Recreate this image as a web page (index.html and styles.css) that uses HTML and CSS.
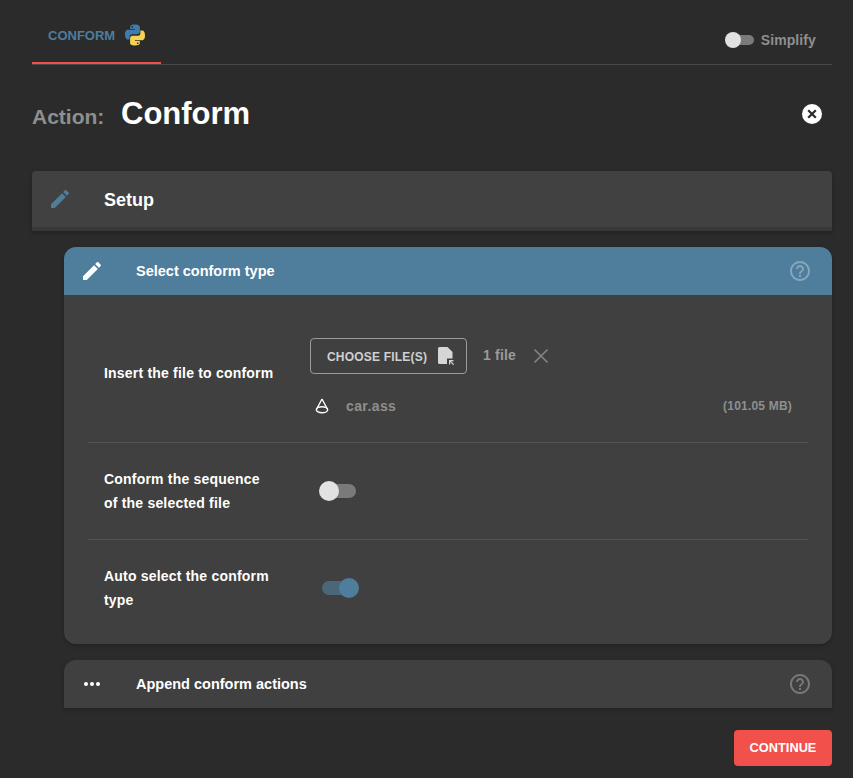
FILE: index.html
```html
<!DOCTYPE html>
<html lang="en">
<head>
    <meta charset="UTF-8">
    <meta name="viewport" content="width=device-width, initial-scale=1.0">
    <title>Conform</title>
    <link rel="stylesheet" href="styles.css">
</head>
<body>
    <div class="container">
        <div class="tabs">
            <div class="tab">
                <span class="tab-label">CONFORM</span>
                <svg class="python-logo" viewBox="0 0 24 24" width="24" height="24">
                    <path fill="#3f7cac" d="M11.9 1.500c-5 0-4.700 2.200-4.700 2.200v2.300H12v.7H5.300S2 6.300 2 11.500s2.900 5 2.900 5h1.700v-2.400s-.1-2.900 2.800-2.900h4.800s2.700 0 2.700-2.600V4.300s.4-2.800-5-2.800zM9.300 3a.9.900 0 1 1 0 1.800.9.900 0 0 1 0-1.800z"/>
                    <path fill="#f7d354" d="M12.100 22.500c5 0 4.700-2.200 4.700-2.200V18H12v-.7h6.700s3.300.4 3.300-4.800-2.900-5-2.900-5h-1.700v2.400s.1 2.900-2.800 2.900H9.800s-2.700 0-2.700 2.600v4.300s-.4 2.800 5 2.800zm2.600-1.500a.9.900 0 1 1 0-1.800.9.900 0 0 1 0 1.800z"/>
                </svg>
            </div>
            <div class="simplify">
                <span class="switch switch-small"><span class="switch-thumb"></span></span>
                <span>Simplify</span>
            </div>
        </div>

        <div class="action-row">
            <span class="action-label">Action:</span>
            <h1>Conform</h1>
            <svg class="close-icon" viewBox="0 0 20 20" width="20" height="20">
                <circle cx="10" cy="10" r="10" fill="#fff"/>
                <path d="M6.200 6.200l7.600 7.600M13.800 6.200l-7.600 7.600" stroke="#2b2b2b" stroke-width="2.200" fill="none"/>
            </svg>
        </div>

        <div class="setup-bar">
            <svg class="setup-icon" viewBox="0 0 24 24" width="24" height="24">
                <path fill="#4f7d9c" d="M3 17.250V21h3.750L17.810 9.940l-3.750-3.750L3 17.250zM20.710 7.040a1 1 0 0 0 0-1.410l-2.340-2.340a1 1 0 0 0-1.410 0l-1.830 1.830 3.750 3.750 1.830-1.830z"/>
            </svg>
            <span class="setup-title">Setup</span>
        </div>

        <div class="card">
            <div class="card-header">
                <svg class="header-icon" viewBox="0 0 24 24" width="24" height="24">
                    <path fill="#fff" d="M3 17.250V21h3.750L17.810 9.940l-3.750-3.750L3 17.250zM20.710 7.040a1 1 0 0 0 0-1.410l-2.340-2.340a1 1 0 0 0-1.410 0l-1.830 1.830 3.750 3.750 1.830-1.830z"/>
                </svg>
                <span class="card-title">Select conform type</span>
                <svg class="help-icon help-on-blue" viewBox="0 0 24 24" width="24" height="24">
                    <path fill="currentColor" d="M11 18h2v-2h-2v2zm1-16C6.480 2 2 6.480 2 12s4.480 10 10 10 10-4.480 10-10S17.520 2 12 2zm0 18c-4.410 0-8-3.590-8-8s3.590-8 8-8 8 3.590 8 8-3.590 8-8 8zm0-14c-2.210 0-4 1.790-4 4h2c0-1.100.9-2 2-2s2 .9 2 2c0 2-3 1.750-3 5h2c0-2.250 3-2.500 3-5 0-2.210-1.790-4-4-4z"/>
                </svg>
            </div>
            <div class="card-body">
                <div class="field field-file">
                    <div class="field-label">Insert the file to conform</div>
                    <div class="file-box">
                        <div class="file-controls">
                            <div class="choose-btn">
                                <span class="choose-text">CHOOSE FILE(S)</span>
                                <svg viewBox="0 0 18 20" width="18" height="20">
                                    <path fill="#d6d6d6" d="M2.500 1h8l5 5v6.500H10V18H2.500A1.500 1.500 0 0 1 1 16.500v-14A1.500 1.500 0 0 1 2.500 1z"/>
                                    <path fill="#d6d6d6" d="M12 14h4.500v1.200h-2.400l3 3-.9.800-3-3v2.400H12z"/>
                                </svg>
                            </div>
                            <span class="file-count">1 file</span>
                            <svg class="clear-icon" viewBox="0 0 14 14" width="14" height="14">
                                <path d="M.5.5l13 13M13.500.5l-13 13" stroke="#7f7f7f" stroke-width="1.600" fill="none"/>
                            </svg>
                        </div>
                        <div class="file-row">
                            <svg viewBox="0 0 16 16" width="16" height="16">
                                <path d="M8 1L2.400 11.500M8 1L13.600 11.500" stroke="#fff" stroke-width="1.400" fill="none"/>
                                <ellipse cx="8" cy="11.800" rx="5.700" ry="3" stroke="#fff" stroke-width="1.400" fill="none"/>
                            </svg>
                            <span class="file-name">car.ass</span>
                            <span class="file-size">(101.05 MB)</span>
                        </div>
                    </div>
                </div>
                <div class="field">
                    <div class="field-label">Conform the sequence of the selected file</div>
                    <span class="switch"><span class="switch-thumb"></span></span>
                </div>
                <div class="field">
                    <div class="field-label">Auto select the conform type</div>
                    <span class="switch switch-on"><span class="switch-thumb"></span></span>
                </div>
            </div>
        </div>

        <div class="card card-collapsed">
            <div class="card-header">
                <svg class="header-icon" viewBox="0 0 24 24" width="24" height="24">
                    <circle cx="6" cy="12" r="2" fill="#fff"/>
                    <circle cx="12" cy="12" r="2" fill="#fff"/>
                    <circle cx="18" cy="12" r="2" fill="#fff"/>
                </svg>
                <span class="card-title">Append conform actions</span>
                <svg class="help-icon" viewBox="0 0 24 24" width="24" height="24">
                    <path fill="currentColor" d="M11 18h2v-2h-2v2zm1-16C6.480 2 2 6.480 2 12s4.480 10 10 10 10-4.480 10-10S17.520 2 12 2zm0 18c-4.410 0-8-3.590-8-8s3.590-8 8-8 8 3.590 8 8-3.590 8-8 8zm0-14c-2.210 0-4 1.790-4 4h2c0-1.100.9-2 2-2s2 .9 2 2c0 2-3 1.750-3 5h2c0-2.250 3-2.500 3-5 0-2.210-1.790-4-4-4z"/>
                </svg>
            </div>
        </div>

        <div class="footer">
            <div class="continue-btn">CONTINUE</div>
        </div>
    </div>
</body>
</html>
```

FILE: styles.css
```css
body {
    font-family: 'Liberation Sans', Arial, sans-serif;
    font-weight: 700;
    background-color: #2b2b2b;
    color: #fff;
    margin: 0;
    padding: 0;
}

.container {
    padding: 0 21px 0 32px;
    height: 778px;
    box-sizing: border-box;
    overflow: hidden;
}

.tabs {
    display: flex;
    justify-content: space-between;
    height: 65px;
    border-bottom: 1px solid #484848;
    box-sizing: border-box;
}

.tab {
    width: 129px;
    height: 64px;
    box-sizing: border-box;
    border-bottom: 2px solid #f2504a;
    display: flex;
    align-items: flex-start;
    padding: 25px 0 0 16px;
    gap: 8px;
}

.tab-label {
    margin-top: 1px;
    color: #4f7d9c;
    font-size: 13px;
    line-height: 20px;
}

.python-logo {
    margin-top: -2px;
}

.simplify {
    display: flex;
    align-items: center;
    gap: 7px;
    height: 79px;
    padding-right: 16px;
    color: #8f8f8f;
    font-size: 14px;
    letter-spacing: 0.1px;
}

.switch {
    position: relative;
    display: inline-block;
    width: 33px;
    height: 14px;
    border-radius: 7px;
    background-color: #7a7a7a;
}

.switch-thumb {
    position: absolute;
    left: -4px;
    top: -3px;
    width: 20px;
    height: 20px;
    border-radius: 50%;
    background-color: #e2e2e2;
}

.switch-small {
    width: 25px;
    height: 10px;
    border-radius: 5px;
}

.switch-small .switch-thumb {
    top: -3px;
    width: 16px;
    height: 16px;
}

.switch-on {
    margin-left: -1px;
    background-color: #4a6679;
}

.switch-on .switch-thumb {
    left: 17px;
    background-color: #4f7d9c;
}

.action-row {
    display: flex;
    align-items: center;
    height: 64px;
    margin-top: 17px;
    padding-right: 10px;
}

.action-label {
    color: #8f8f8f;
    font-size: 21px;
    width: 89px;
    margin-top: 5px;
}

h1 {
    margin: 0;
    font-size: 31px;
    flex: 1;
}

.setup-bar {
    display: flex;
    align-items: center;
    height: 56px;
    margin-top: 25px;
    padding-left: 16px;
    background-color: #414141;
    border-bottom: 4px solid #383838;
    border-radius: 4px 4px 0 0;
    box-shadow: 0 2px 4px rgba(0, 0, 0, 0.25);
    font-size: 18px;
}

.setup-icon {
    margin-right: 32px;
}

.setup-title {
    margin-top: 2px;
}

.card {
    margin: 16px 0 0 32px;
    background-color: #404040;
    border-radius: 12px;
    box-shadow: 0 2px 4px rgba(0, 0, 0, 0.2);
    overflow: hidden;
}

.card-collapsed {
    border-radius: 12px 12px 0 0;
}

.card-header {
    display: flex;
    align-items: center;
    height: 48px;
    padding: 0 20px 0 16px;
}

.card:not(.card-collapsed) .card-header {
    background-color: #4f7d9c;
}

.header-icon {
    margin-right: 32px;
}

.card-title {
    flex: 1;
    font-size: 14.5px;
}

.help-icon {
    color: #787878;
}

.help-on-blue {
    color: #85a6bc;
}

.card-body {
    padding: 26px 24px 8px;
}

.field {
    display: flex;
    align-items: center;
    box-sizing: border-box;
    height: 97px;
    padding-left: 16px;
    border-top: 1px solid #545454;
    font-size: 14px;
    line-height: 24px;
    letter-spacing: 0.2px;
}

.field-file {
    height: 121px;
    border-top: none;
    align-items: flex-start;
}

.field .field-label {
    width: 165px;
    margin-right: 54px;
}

.field-file .field-label {
    margin-top: 40px;
    width: 180px;
    margin-right: 26px;
}

.file-box {
    flex: 1;
    padding-top: 17px;
}

.file-controls {
    display: flex;
    align-items: center;
}

.choose-btn {
    display: flex;
    align-items: center;
    justify-content: space-between;
    box-sizing: border-box;
    width: 157px;
    height: 36px;
    padding: 0 11px 0 16px;
    border: 1px solid #9a9a9a;
    border-radius: 4px;
    color: #d0d0d0;
    font-size: 12px;
}

.choose-text {
    margin-top: 2px;
}

.file-count {
    margin: -2px 0 0 16px;
    color: #9a9a9a;
    font-size: 14px;
}

.clear-icon {
    margin-left: 18px;
}

.file-row {
    display: flex;
    align-items: center;
    margin-top: 20px;
    padding: 0 16px 0 4px;
}

.file-name {
    margin-left: 16px;
    flex: 1;
    color: #8f8f8f;
    font-size: 14px;
    letter-spacing: 0.4px;
}

.file-size {
    color: #8f8f8f;
    font-size: 12px;
    letter-spacing: 0.2px;
}

.footer {
    display: flex;
    justify-content: flex-end;
    margin-top: 22px;
}

.continue-btn {
    width: 98px;
    height: 36px;
    border-radius: 4px;
    background-color: #f2504a;
    font-size: 12.8px;
    line-height: 36px;
    text-align: center;
}
```
